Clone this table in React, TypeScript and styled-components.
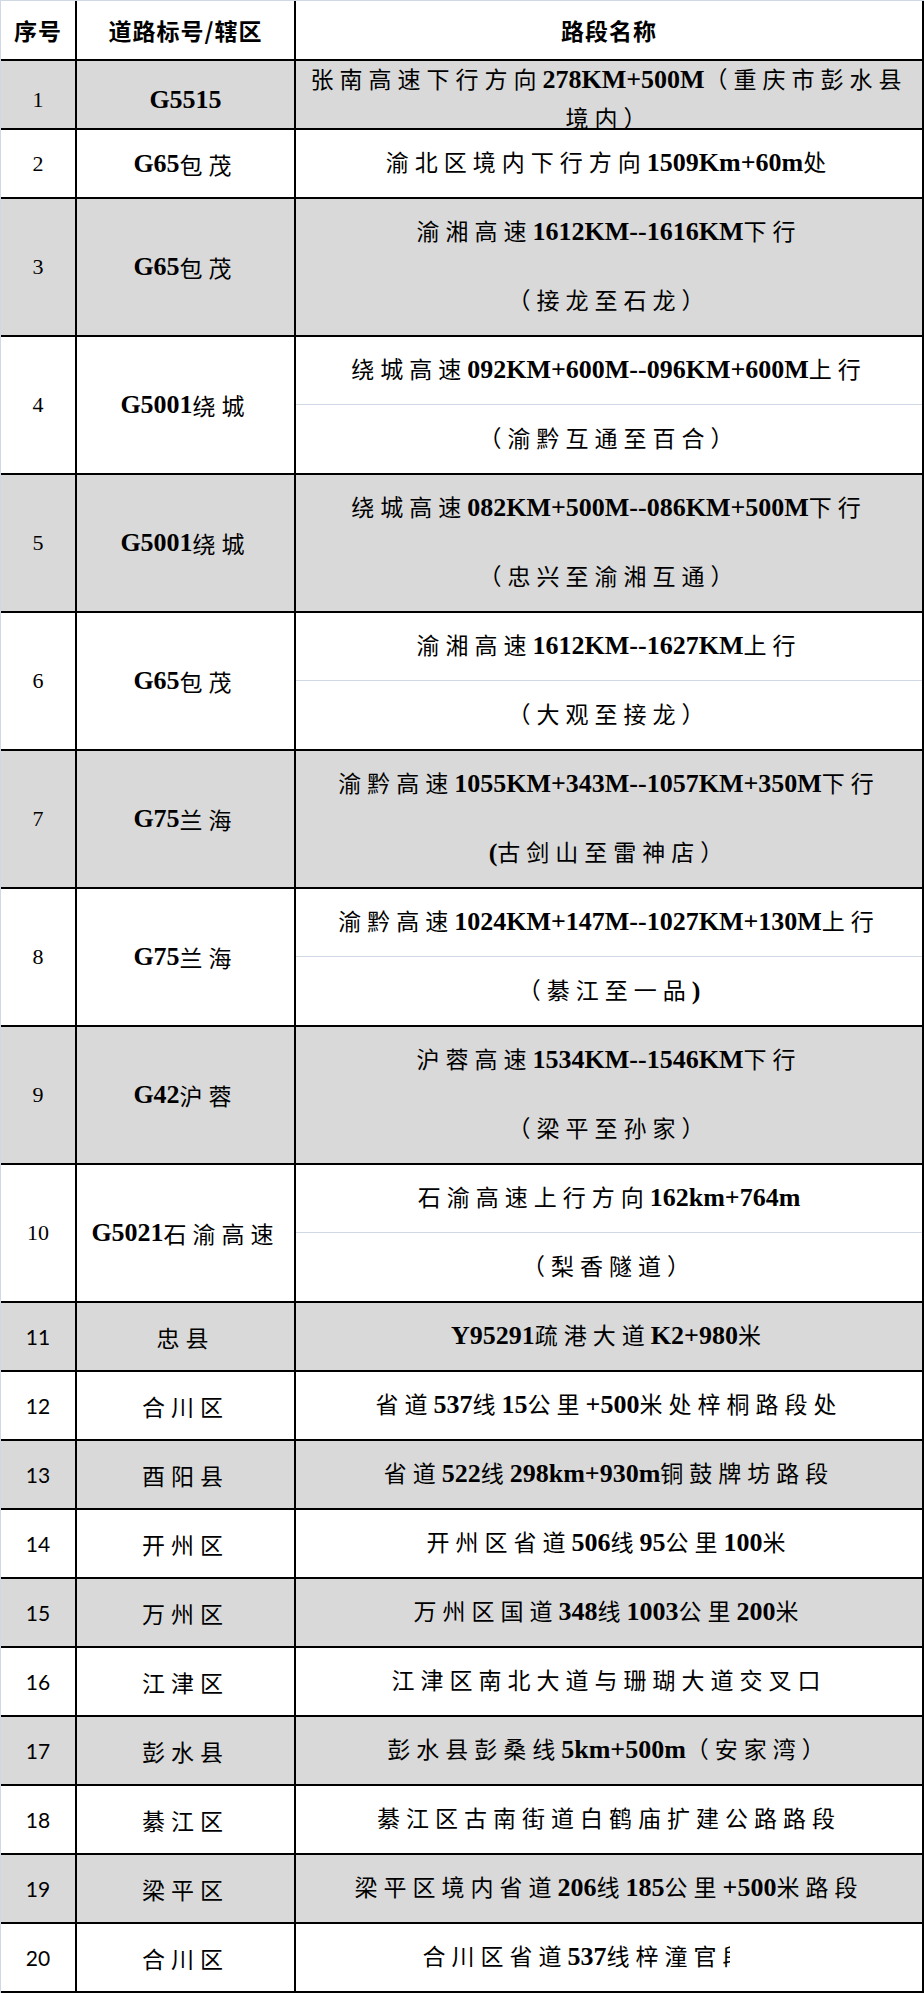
import styled, { createGlobalStyle } from "styled-components";

const GlobalStyle = createGlobalStyle`
    html, body {
        margin: 0;
        padding: 0;
        background: #ffffff;
    }
`;

const GRID = "#d0d7e5";
const FILL = "#d9d9d9";

const Sheet = styled.div`
    width: 924px;
    box-sizing: border-box;
    border-top: 1px solid ${GRID};
    border-left: 1px solid ${GRID};
    color: #000;
    font-family: "Liberation Serif", "Noto Sans CJK SC", serif;
`;

const Row = styled.div<{ $shaded?: boolean; $height: number }>`
    display: grid;
    grid-template-columns: 76px 219px 628px;
    height: ${p => p.$height}px;
    box-sizing: border-box;
    border-bottom: 2px solid #000;
    background: ${p => (p.$shaded ? FILL : "#ffffff")};
`;

const Cell = styled.div`
    display: flex;
    align-items: center;
    justify-content: center;
    box-sizing: border-box;
    border-right: 2px solid #000;
    min-width: 0;
    white-space: nowrap;
`;

const HeadCell = styled(Cell)`
    font-family: "Noto Sans CJK SC", sans-serif;
    font-weight: 700;
    font-size: 23px;
    letter-spacing: 1px;
`;

const IndexCell = styled(Cell)<{ $sans?: boolean }>`
    font-family: ${p => (p.$sans ? '"Lato", "Liberation Sans", sans-serif' : '"Liberation Serif", serif')};
    font-size: ${p => (p.$sans ? 21 : 22)}px;
`;

const Parts = styled.div<{ $shaded?: boolean }>`
    display: grid;
    grid-auto-rows: 1fr;
    box-sizing: border-box;
    border-right: 2px solid #000;
    min-width: 0;
    & > div:not(:last-child) {
        border-bottom: 1px solid ${p => (p.$shaded ? FILL : GRID)};
    }
`;

const Part = styled.div`
    display: flex;
    flex-direction: column;
    align-items: center;
    justify-content: center;
    line-height: 35px;
    white-space: nowrap;
`;

const Line = styled.div`
    white-space: nowrap;
`;

const Latin = styled.span`
    font-family: "Liberation Serif", serif;
    font-weight: 700;
    font-size: 26px;
`;

const Han = styled.span`
    font-family: "Noto Sans CJK SC", sans-serif;
    font-weight: 400;
    font-size: 23px;
    letter-spacing: 6px;
`;

const Cut = styled.span`
    display: inline-block;
    width: 7px;
    overflow: hidden;
    vertical-align: top;
    font-family: "Noto Sans CJK SC", sans-serif;
    font-size: 23px;
`;

const Tail = styled.span`
    display: inline-block;
    width: 66px;
`;

function Mixed({ text }: { text: string }) {
    const parts = text.match(/[\x20-\x7e]+|[^\x20-\x7e]+/g) ?? [];
    return (
        <>
            {parts.map((p, i) =>
                /[\x20-\x7e]/.test(p[0]) ? <Latin key={i}>{p}</Latin> : <Han key={i}>{p}</Han>
            )}
        </>
    );
}

type Entry = {
    road: string;
    // each inner array is one excel cell, each string a line in it
    cells: string[][];
    cut?: string;
};

const entries: Entry[] = [
    { road: "G5515", cells: [["张南高速下行方向278KM+500M（重庆市彭水县", "境内）"]] },
    { road: "G65包茂", cells: [["渝北区境内下行方向1509Km+60m处"]] },
    { road: "G65包茂", cells: [["渝湘高速1612KM--1616KM下行"], ["（接龙至石龙）"]] },
    { road: "G5001绕城", cells: [["绕城高速092KM+600M--096KM+600M上行"], ["（渝黔互通至百合）"]] },
    { road: "G5001绕城", cells: [["绕城高速082KM+500M--086KM+500M下行"], ["（忠兴至渝湘互通）"]] },
    { road: "G65包茂", cells: [["渝湘高速1612KM--1627KM上行"], ["（大观至接龙）"]] },
    { road: "G75兰海", cells: [["渝黔高速1055KM+343M--1057KM+350M下行"], ["(古剑山至雷神店）"]] },
    { road: "G75兰海", cells: [["渝黔高速1024KM+147M--1027KM+130M上行"], ["（綦江至一品)"]] },
    { road: "G42沪蓉", cells: [["沪蓉高速1534KM--1546KM下行"], ["（梁平至孙家）"]] },
    { road: "G5021石渝高速", cells: [["石渝高速上行方向162km+764m"], ["（梨香隧道）"]] },
    { road: "忠县", cells: [["Y95291疏港大道K2+980米"]] },
    { road: "合川区", cells: [["省道537线15公里+500米处梓桐路段处"]] },
    { road: "酉阳县", cells: [["省道522线298km+930m铜鼓牌坊路段"]] },
    { road: "开州区", cells: [["开州区省道506线95公里100米"]] },
    { road: "万州区", cells: [["万州区国道348线1003公里200米"]] },
    { road: "江津区", cells: [["江津区南北大道与珊瑚大道交叉口"]] },
    { road: "彭水县", cells: [["彭水县彭桑线5km+500m（安家湾）"]] },
    { road: "綦江区", cells: [["綦江区古南街道白鹤庙扩建公路路段"]] },
    { road: "梁平区", cells: [["梁平区境内省道206线185公里+500米路段"]] },
    { road: "合川区", cells: [["合川区省道537线梓潼官"]], cut: "段" },
];

export default function App() {
    return (
        <>
            <GlobalStyle />
            <Sheet>
                <Row $height={60}>
                    <HeadCell>序号</HeadCell>
                    <HeadCell>道路标号/辖区</HeadCell>
                    <HeadCell>路段名称</HeadCell>
                </Row>
                {entries.map((e, i) => {
                    const shaded = i % 2 === 0;
                    return (
                        <Row key={i} $shaded={shaded} $height={69 * e.cells.length}>
                            <IndexCell $sans={i >= 10}>{i + 1}</IndexCell>
                            <Cell>
                                <Mixed text={e.road} />
                            </Cell>
                            <Parts $shaded={shaded}>
                                {e.cells.map((lines, j) => (
                                    <Part key={j}>
                                        {lines.map((l, k) => (
                                            <Line key={k}>
                                                <Mixed text={l} />
                                                {e.cut && (
                                                    <>
                                                        <Cut>{e.cut}</Cut>
                                                        <Tail />
                                                    </>
                                                )}
                                            </Line>
                                        ))}
                                    </Part>
                                ))}
                            </Parts>
                        </Row>
                    );
                })}
            </Sheet>
        </>
    );
}
